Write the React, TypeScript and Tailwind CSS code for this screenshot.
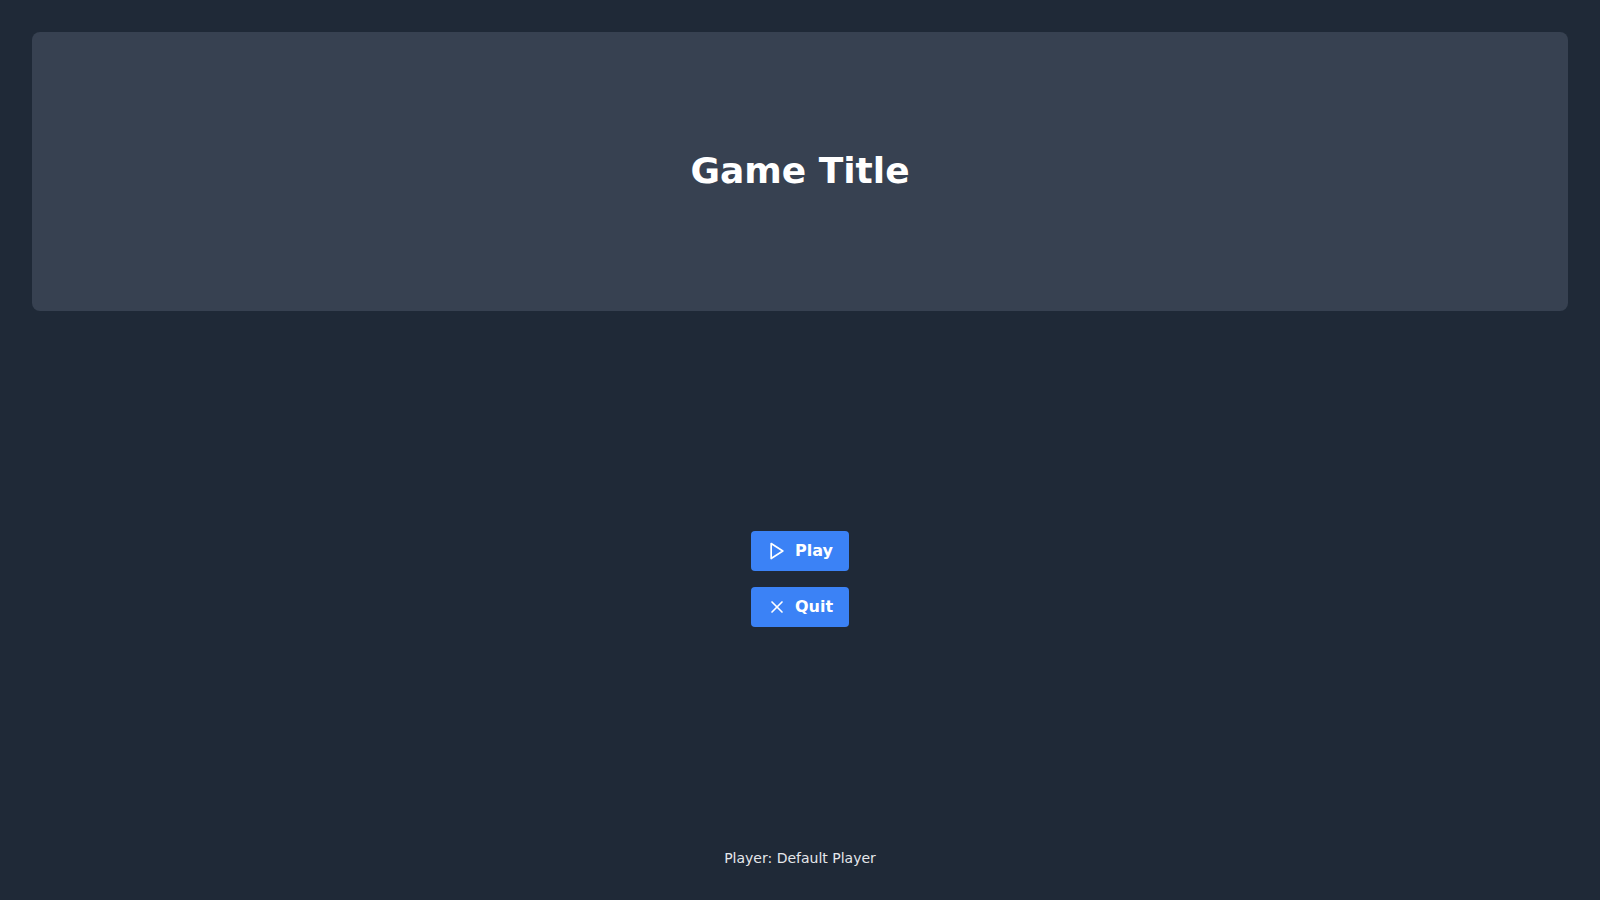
import React from 'react';
import { FiPlay, FiX } from 'react-icons/fi';

const MenuButton = ({ icon, label }: { icon: React.ReactNode; label: string }) => (
  <button className="bg-[#3b82f6] hover:bg-[#2563eb] text-white font-bold text-base leading-6 px-4 py-2 rounded inline-flex items-center gap-2">
    {icon}
    {label}
  </button>
);

const App = () => {
  return (
    <div className="h-screen bg-[#1f2937] p-8 flex flex-col font-['DejaVu_Sans',sans-serif]">
      <header className="h-[279px] bg-[#374151] rounded-lg flex items-center justify-center pb-0.5">
        <h1 className="text-4xl font-bold text-white">Game Title</h1>
      </header>

      <main className="flex-1 flex flex-col items-center justify-center gap-4 pb-0.5">
        <MenuButton icon={<FiPlay size={20} />} label="Play" />
        <MenuButton icon={<FiX size={20} />} label="Quit" />
      </main>

      <footer className="text-center text-sm text-gray-200">Player: Default Player</footer>
    </div>
  );
};

export default App;
